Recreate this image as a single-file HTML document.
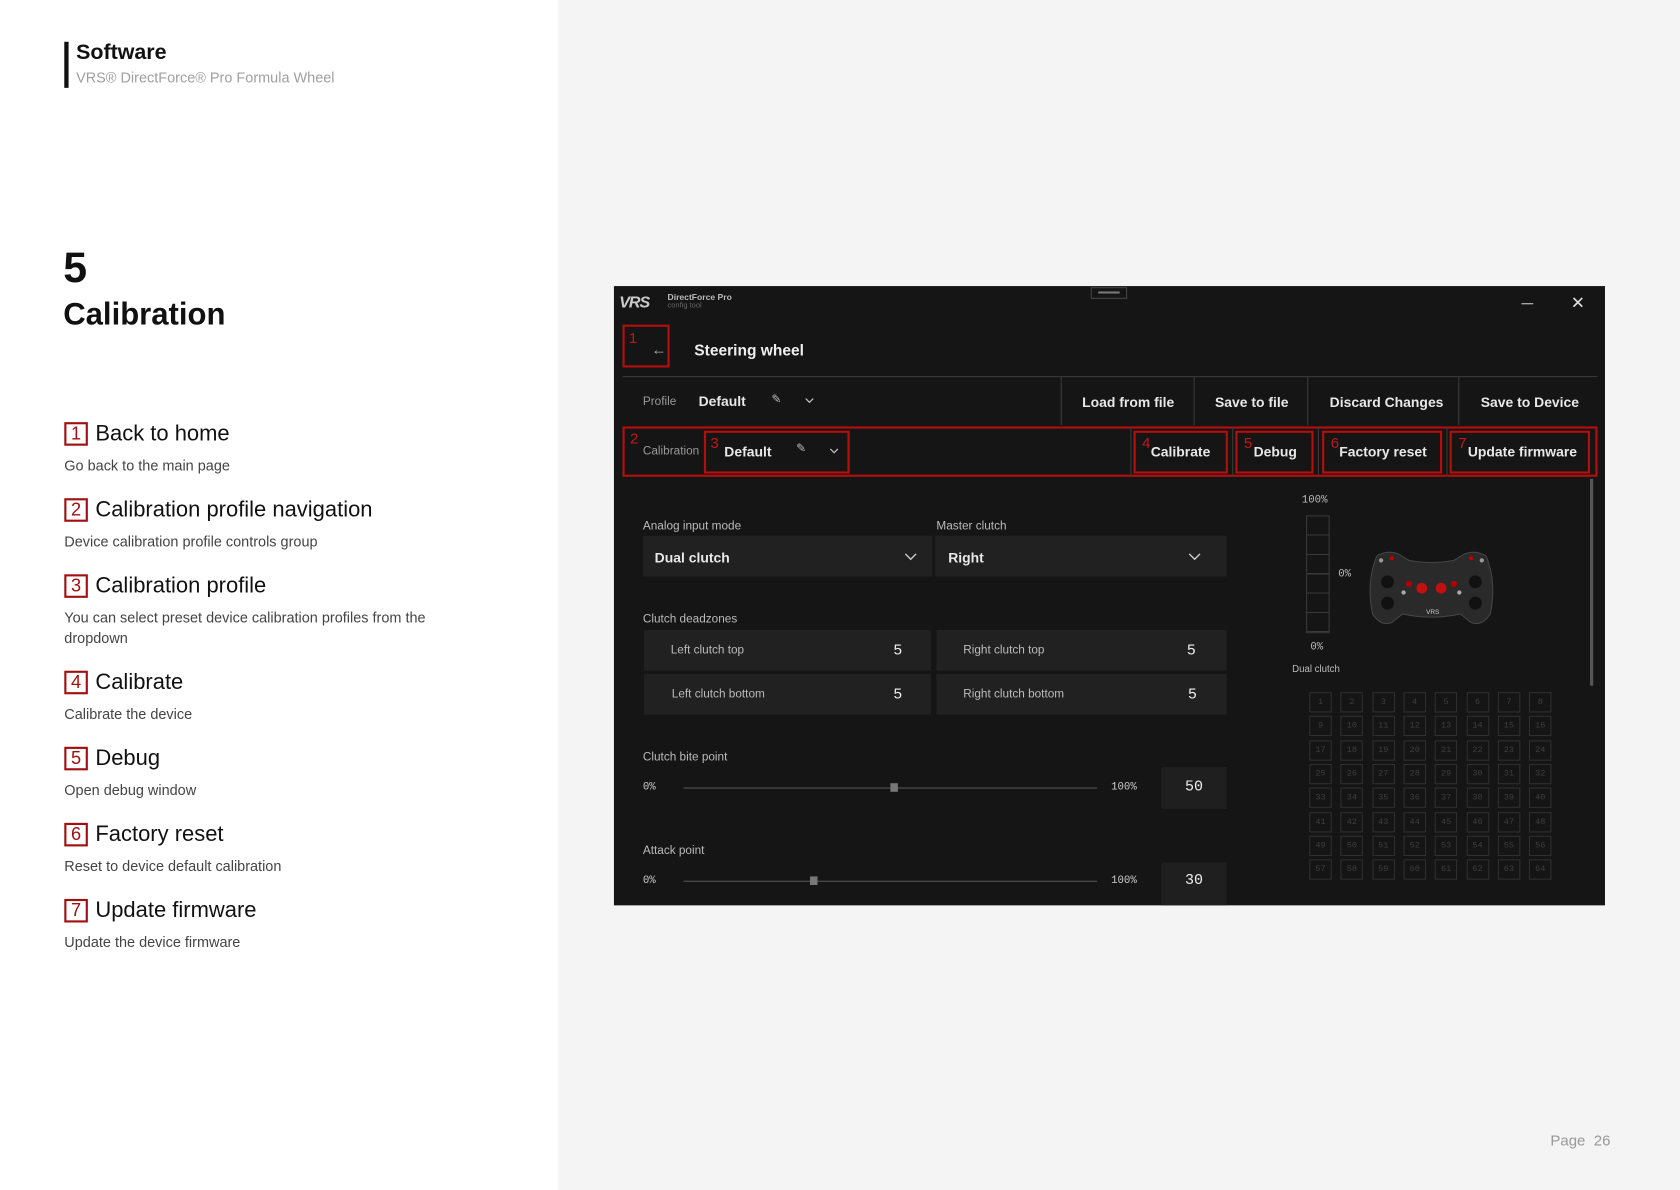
<!DOCTYPE html>
<html><head><meta charset="utf-8"><style>
*{margin:0;padding:0;box-sizing:border-box}
html,body{width:1680px;height:1190px;overflow:hidden;background:#f4f4f4;font-family:"Liberation Sans",sans-serif}
#w{position:absolute;left:0;top:0;width:1568px;height:1111px;transform:scale(1.07143);transform-origin:0 0}
.a{position:absolute;white-space:nowrap}
.left{position:absolute;left:0;top:0;width:521px;height:1111px;background:#fff}
.nb{position:absolute;left:60px;width:22px;height:22px;border:2px solid #a01010;color:#a01010;font-size:17px;line-height:18px;text-align:center}
.tt{position:absolute;left:89px;font-size:20.5px;color:#111}
.ds{position:absolute;left:60px;font-size:13.5px;color:#444;line-height:19px}
.app{position:absolute;left:573px;top:267px;width:925px;height:578px;background:#151515;overflow:hidden;color:#eee}
.app .a{position:absolute}
.rb{position:absolute;border:2px solid #b50e0e}
.rn{position:absolute;color:#c01818;font-size:14px}
.btn{font-size:13px;font-weight:bold;color:#e8e8e8}
.sep{position:absolute;width:1px;background:#3a3a3a}
.lbl{font-size:11px;color:#bbb}
.fld{position:absolute;background:#212121}
.mono{font-family:"Liberation Mono",monospace}
.cell{position:absolute;width:21px;height:19px;border:1px solid #2f2f2f;color:#3e3e3e;font-family:"Liberation Mono",monospace;font-size:8px;text-align:center;line-height:17px}
.chev{position:absolute}
</style></head><body><div id="w">
<div class="left"></div>
<div class="a" style="left:60px;top:39px;width:4px;height:43px;background:#111"></div>
<div class="a" style="left:71px;top:38px;font-size:20px;font-weight:bold;color:#111">Software</div>
<div class="a" style="left:71px;top:65px;font-size:13.5px;color:#a0a0a0">VRS® DirectForce® Pro Formula Wheel</div>
<div class="a" style="left:59px;top:228px;font-size:40px;font-weight:bold;color:#111">5</div>
<div class="a" style="left:59px;top:278px;font-size:29px;font-weight:bold;color:#111">Calibration</div>

<div class="nb" style="top:394px">1</div><div class="tt a" style="top:393px">Back to home</div><div class="ds a" style="top:425px">Go back to the main page</div>
<div class="nb" style="top:465px">2</div><div class="tt a" style="top:464px">Calibration profile navigation</div><div class="ds a" style="top:496px">Device calibration profile controls group</div>
<div class="nb" style="top:536px">3</div><div class="tt a" style="top:535px">Calibration profile</div><div class="ds" style="top:567px">You can select preset device calibration profiles from the<br>dropdown</div>
<div class="nb" style="top:626px">4</div><div class="tt a" style="top:625px">Calibrate</div><div class="ds a" style="top:657px">Calibrate the device</div>
<div class="nb" style="top:697px">5</div><div class="tt a" style="top:696px">Debug</div><div class="ds a" style="top:728px">Open debug window</div>
<div class="nb" style="top:768px">6</div><div class="tt a" style="top:767px">Factory reset</div><div class="ds a" style="top:799px">Reset to device default calibration</div>
<div class="nb" style="top:839px">7</div><div class="tt a" style="top:838px">Update firmware</div><div class="ds a" style="top:870px">Update the device firmware</div>

<div class="a" style="left:1447px;top:1056px;font-size:14px;color:#999">Page&nbsp;&nbsp;26</div>

<div class="app">
 <div class="a" style="left:5px;top:7px;font-size:15px;font-weight:bold;font-style:italic;color:#ccc;letter-spacing:-1px">VRS</div>
 <div class="a" style="left:50px;top:6px;font-size:8px;font-weight:bold;color:#bbb">DirectForce Pro</div>
 <div class="a" style="left:50px;top:15px;font-size:7px;color:#666">config tool</div>
 <div class="a" style="left:445px;top:1px;width:34px;height:11px;border:1px solid #444"><div style="margin:3px 6px;height:2px;background:#777"></div></div>
 <div class="a" style="left:847px;top:16px;width:11px;height:1px;background:#ccc"></div>
 <div class="a" style="left:893px;top:6px;font-size:16px;color:#ddd">✕</div>

 <div class="rb" style="left:8px;top:36px;width:44px;height:40px"></div><div class="rn" style="left:14px;top:40px">1</div>
 <div class="a" style="left:35px;top:51px;font-size:14px;color:#aaa">←</div>
 <div class="a" style="left:75px;top:53px;font-size:14.5px;font-weight:bold;color:#eee">Steering wheel</div>

 <div class="a" style="left:8px;top:84px;width:910px;height:1px;background:#3a3a3a"></div>
 <div class="a lbl" style="left:27px;top:102px;color:#999">Profile</div>
 <div class="a btn" style="left:79px;top:100px">Default</div>
 <div class="a" style="left:147px;top:99px;font-size:11px;color:#bbb">✎</div>
 <svg class="chev" style="left:178px;top:104px" width="9" height="6"><polyline points="1,1 4.5,4.5 8,1" fill="none" stroke="#bbb" stroke-width="1.2"/></svg>
 <div class="sep" style="left:417px;top:85px;height:45px"></div>
 <div class="sep" style="left:541px;top:85px;height:45px"></div>
 <div class="sep" style="left:647px;top:85px;height:45px"></div>
 <div class="sep" style="left:788px;top:85px;height:45px"></div>
 <div class="a btn" style="left:437px;top:101px">Load from file</div>
 <div class="a btn" style="left:561px;top:101px">Save to file</div>
 <div class="a btn" style="left:668px;top:101px">Discard Changes</div>
 <div class="a btn" style="left:809px;top:101px">Save to Device</div>

 <div class="rb" style="left:8px;top:131px;width:910px;height:47px"></div><div class="rn" style="left:15px;top:134px">2</div>
 <div class="a lbl" style="left:27px;top:148px;color:#999">Calibration</div>
 <div class="rb" style="left:84px;top:135px;width:136px;height:40px"></div><div class="rn" style="left:90px;top:138px">3</div>
 <div class="a btn" style="left:103px;top:147px">Default</div>
 <div class="a" style="left:170px;top:145px;font-size:11px;color:#bbb">✎</div>
 <svg class="chev" style="left:201px;top:151px" width="9" height="6"><polyline points="1,1 4.5,4.5 8,1" fill="none" stroke="#bbb" stroke-width="1.2"/></svg>
 <div class="sep" style="left:482px;top:132px;height:45px"></div>
 <div class="sep" style="left:577px;top:132px;height:45px"></div>
 <div class="sep" style="left:657px;top:132px;height:45px"></div>
 <div class="sep" style="left:777px;top:132px;height:45px"></div>
 <div class="rb" style="left:485px;top:135px;width:88px;height:40px"></div><div class="rn" style="left:493px;top:138px">4</div><div class="a btn" style="left:501px;top:147px">Calibrate</div>
 <div class="rb" style="left:580px;top:135px;width:73px;height:40px"></div><div class="rn" style="left:588px;top:138px">5</div><div class="a btn" style="left:597px;top:147px">Debug</div>
 <div class="rb" style="left:661px;top:135px;width:112px;height:40px"></div><div class="rn" style="left:669px;top:138px">6</div><div class="a btn" style="left:677px;top:147px">Factory reset</div>
 <div class="rb" style="left:780px;top:135px;width:131px;height:40px"></div><div class="rn" style="left:788px;top:138px">7</div><div class="a btn" style="left:797px;top:147px">Update firmware</div>

 <div class="a" style="left:911px;top:180px;width:3px;height:193px;background:#555"></div>

 <div class="a lbl" style="left:27px;top:218px">Analog input mode</div>
 <div class="a lbl" style="left:301px;top:218px">Master clutch</div>
 <div class="fld" style="left:27px;top:233px;width:270px;height:38px"></div>
 <div class="fld" style="left:300px;top:233px;width:272px;height:38px"></div>
 <div class="a btn" style="left:38px;top:246px">Dual clutch</div>
 <div class="a btn" style="left:312px;top:246px">Right</div>
 <svg class="chev" style="left:271px;top:249px" width="12" height="8"><polyline points="1,1 6,6 11,1" fill="none" stroke="#ccc" stroke-width="1.3"/></svg>
 <svg class="chev" style="left:536px;top:249px" width="12" height="8"><polyline points="1,1 6,6 11,1" fill="none" stroke="#ccc" stroke-width="1.3"/></svg>

 <div class="a lbl" style="left:27px;top:305px">Clutch deadzones</div>
 <div class="fld" style="left:28px;top:321px;width:268px;height:38px"></div>
 <div class="fld" style="left:301px;top:321px;width:271px;height:38px"></div>
 <div class="fld" style="left:28px;top:362px;width:268px;height:38px"></div>
 <div class="fld" style="left:301px;top:362px;width:271px;height:38px"></div>
 <div class="a lbl" style="left:53px;top:334px">Left clutch top</div><div class="a" style="left:261px;top:331px;font-size:14px">5</div>
 <div class="a lbl" style="left:326px;top:334px">Right clutch top</div><div class="a" style="left:535px;top:331px;font-size:14px">5</div>
 <div class="a lbl" style="left:54px;top:375px">Left clutch bottom</div><div class="a" style="left:261px;top:372px;font-size:14px">5</div>
 <div class="a lbl" style="left:326px;top:375px">Right clutch bottom</div><div class="a" style="left:536px;top:372px;font-size:14px">5</div>

 <div class="a lbl" style="left:27px;top:434px">Clutch bite point</div>
 <div class="a mono" style="left:27px;top:463px;font-size:10px;color:#ccc">0%</div>
 <div class="a" style="left:65px;top:468px;width:386px;height:1px;background:#555"></div>
 <div class="a" style="left:258px;top:464px;width:7px;height:8px;background:#777"></div>
 <div class="a mono" style="left:464px;top:463px;font-size:10px;color:#ccc">100%</div>
 <div class="fld" style="left:511px;top:449px;width:61px;height:39px;background:#1f1f1f"></div>
 <div class="a mono" style="left:533px;top:460px;font-size:14px">50</div>

 <div class="a lbl" style="left:27px;top:521px">Attack point</div>
 <div class="a mono" style="left:27px;top:550px;font-size:10px;color:#ccc">0%</div>
 <div class="a" style="left:65px;top:555px;width:386px;height:1px;background:#555"></div>
 <div class="a" style="left:183px;top:551px;width:7px;height:8px;background:#777"></div>
 <div class="a mono" style="left:464px;top:550px;font-size:10px;color:#ccc">100%</div>
 <div class="fld" style="left:511px;top:538px;width:61px;height:40px;background:#1f1f1f"></div>
 <div class="a mono" style="left:533px;top:547px;font-size:14px">30</div>

 <div class="a mono" style="left:642px;top:195px;font-size:10px;color:#bbb">100%</div>
 <div class="a" style="left:646px;top:214px;width:22px;height:110px;border:1px solid #3a3a3a;background:repeating-linear-gradient(#151515 0,#151515 17px,#3a3a3a 17px,#3a3a3a 18px)"></div>
 <div class="a mono" style="left:676px;top:264px;font-size:10px;color:#bbb">0%</div>
 <div class="a mono" style="left:650px;top:332px;font-size:10px;color:#bbb">0%</div>
 <div class="a" style="left:633px;top:352px;font-size:9px;color:#bbb">Dual clutch</div>
 <svg class="a" style="left:702px;top:246px" width="122" height="74" viewBox="0 0 122 74">
  <path d="M10 6 Q20 0 30 4 L40 10 Q61 14 82 10 L92 4 Q102 0 112 6 Q122 30 116 60 Q108 72 98 68 L88 60 Q61 66 34 60 L24 68 Q14 72 6 60 Q0 30 10 6Z" fill="#2a2a2a" stroke="#444"/>
  <circle cx="14" cy="10" r="2" fill="#999"/><circle cx="24" cy="8" r="2" fill="#b00"/><circle cx="98" cy="8" r="2" fill="#b00"/><circle cx="108" cy="10" r="2" fill="#999"/>
  <circle cx="20" cy="30" r="6" fill="#111"/><circle cx="102" cy="30" r="6" fill="#111"/>
  <circle cx="20" cy="50" r="6" fill="#111"/><circle cx="102" cy="50" r="6" fill="#111"/>
  <circle cx="52" cy="36" r="5" fill="#c01010"/><circle cx="70" cy="36" r="5" fill="#c01010"/>
  <circle cx="40" cy="32" r="3" fill="#a00"/><circle cx="82" cy="32" r="3" fill="#a00"/>
  <circle cx="35" cy="40" r="2" fill="#aaa"/><circle cx="87" cy="40" r="2" fill="#aaa"/>
  <text x="56" y="60" font-size="6" fill="#ccc" font-family="Liberation Sans">VRS</text>
 </svg>
 <div id="grid"></div>
</div>
</div>
<script>
var g=document.getElementById('grid'),h='';
for(var r=0;r<8;r++)for(var c=0;c<8;c++){h+='<div class="cell" style="left:'+(649+c*29.3)+'px;top:'+(379+r*22.3)+'px">'+(r*8+c+1)+'</div>';}
g.innerHTML=h;
</script>
</body></html>
